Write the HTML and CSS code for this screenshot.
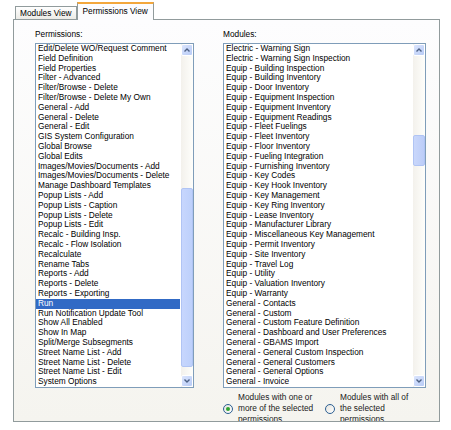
FILE: index.html
```html
<!DOCTYPE html>
<html>
<head>
<meta charset="utf-8">
<link rel="stylesheet" href="styles.css">
</head>
<body>
<div class="tabs">
  <div class="tab">Modules View</div>
  <div class="tab active">Permissions View</div>
</div>
<div class="panel">
  <div class="col col-perm">
    <div class="label">Permissions:</div>
    <div class="listbox">
      <ul class="items">
        <li>Edit/Delete WO/Request Comment</li>
        <li>Field Definition</li>
        <li>Field Properties</li>
        <li>Filter - Advanced</li>
        <li>Filter/Browse - Delete</li>
        <li>Filter/Browse - Delete My Own</li>
        <li>General - Add</li>
        <li>General - Delete</li>
        <li>General - Edit</li>
        <li>GIS System Configuration</li>
        <li>Global Browse</li>
        <li>Global Edits</li>
        <li>Images/Movies/Documents - Add</li>
        <li>Images/Movies/Documents - Delete</li>
        <li>Manage Dashboard Templates</li>
        <li>Popup Lists - Add</li>
        <li>Popup Lists - Caption</li>
        <li>Popup Lists - Delete</li>
        <li>Popup Lists - Edit</li>
        <li>Recalc - Building Insp.</li>
        <li>Recalc - Flow Isolation</li>
        <li>Recalculate</li>
        <li>Rename Tabs</li>
        <li>Reports - Add</li>
        <li>Reports - Delete</li>
        <li>Reports - Exporting</li>
        <li class="selected">Run</li>
        <li>Run Notification Update Tool</li>
        <li>Show All Enabled</li>
        <li>Show In Map</li>
        <li>Split/Merge Subsegments</li>
        <li>Street Name List - Add</li>
        <li>Street Name List - Delete</li>
        <li>Street Name List - Edit</li>
        <li>System Options</li>
      </ul>
      <div class="vscroll">
        <div class="sbtn"><svg viewBox="0 0 8 8" width="8" height="8"><polyline points="1.5,5.5 4,3 6.5,5.5" fill="none" stroke="#4d6185" stroke-width="1.4"/></svg></div>
        <div class="track"><div class="thumb thumb-big" style="margin-top:132px;height:179px"></div></div>
        <div class="sbtn"><svg viewBox="0 0 8 8" width="8" height="8"><polyline points="1.5,2.5 4,5 6.5,2.5" fill="none" stroke="#4d6185" stroke-width="1.4"/></svg></div>
      </div>
    </div>
  </div>
  <div class="col col-mod">
    <div class="label">Modules:</div>
    <div class="listbox">
      <ul class="items">
        <li>Electric - Warning Sign</li>
        <li>Electric - Warning Sign Inspection</li>
        <li>Equip - Building Inspection</li>
        <li>Equip - Building Inventory</li>
        <li>Equip - Door Inventory</li>
        <li>Equip - Equipment Inspection</li>
        <li>Equip - Equipment Inventory</li>
        <li>Equip - Equipment Readings</li>
        <li>Equip - Fleet Fuelings</li>
        <li>Equip - Fleet Inventory</li>
        <li>Equip - Floor Inventory</li>
        <li>Equip - Fueling Integration</li>
        <li>Equip - Furnishing Inventory</li>
        <li>Equip - Key Codes</li>
        <li>Equip - Key Hook Inventory</li>
        <li>Equip - Key Management</li>
        <li>Equip - Key Ring Inventory</li>
        <li>Equip - Lease Inventory</li>
        <li>Equip - Manufacturer Library</li>
        <li>Equip - Miscellaneous Key Management</li>
        <li>Equip - Permit Inventory</li>
        <li>Equip - Site Inventory</li>
        <li>Equip - Travel Log</li>
        <li>Equip - Utility</li>
        <li>Equip - Valuation Inventory</li>
        <li>Equip - Warranty</li>
        <li>General - Contacts</li>
        <li>General - Custom</li>
        <li>General - Custom Feature Definition</li>
        <li>General - Dashboard and User Preferences</li>
        <li>General - GBAMS Import</li>
        <li>General - General Custom Inspection</li>
        <li>General - General Customers</li>
        <li>General - General Options</li>
        <li>General - Invoice</li>
      </ul>
      <div class="vscroll">
        <div class="sbtn"><svg viewBox="0 0 8 8" width="8" height="8"><polyline points="1.5,5.5 4,3 6.5,5.5" fill="none" stroke="#4d6185" stroke-width="1.4"/></svg></div>
        <div class="track"><div class="thumb" style="margin-top:79px;height:31px"></div></div>
        <div class="sbtn"><svg viewBox="0 0 8 8" width="8" height="8"><polyline points="1.5,2.5 4,5 6.5,2.5" fill="none" stroke="#4d6185" stroke-width="1.4"/></svg></div>
      </div>
    </div>
    <div class="radios">
      <label class="radio radio-one"><span class="dot checked"></span><span class="rtext">Modules with one or more of the selected permissions</span></label>
      <label class="radio"><span class="dot"></span><span class="rtext">Modules with all of the selected permissions</span></label>
    </div>
  </div>
</div>
</body>
</html>
```
FILE: styles.css
```css
html, body {
  margin: 0;
  padding: 0;
  background: #ffffff;
}
body {
  width: 451px;
  height: 430px;
  overflow: hidden;
  font-family: "Liberation Sans", Arial, sans-serif;
  font-size: 8.3px;
  color: #000;
}
.tabs {
  display: flex;
  align-items: flex-end;
  height: 19px;
  padding-left: 15px;
}
.tab {
  height: 12px;
  line-height: 12px;
  padding: 0 4px;
  border: 1px solid #919b9c;
  border-bottom: none;
  background: linear-gradient(#ffffff, #ecebe6);
  font-size: 8.3px;
  white-space: nowrap;
}
.tab.active {
  position: relative;
  z-index: 1;
  height: 16px;
  line-height: 15px;
  margin-bottom: -1px;
  padding: 0 5px;
  background: #fcfcfe;
  border-top: 2px solid #f3a73c;
  border-left: 1px solid #919b9c;
  border-right: 1px solid #919b9c;
}
.panel {
  box-sizing: border-box;
  margin-left: 13px;
  width: 427px;
  height: 403px;
  border: 1px solid #919b9c;
  background: linear-gradient(#fdfdfe, #f5f4ef);
  padding: 9px 0 0 21px;
  display: flex;
  gap: 29px;
  overflow: hidden;
}
.col-perm { width: 159px; }
.col-mod { width: 203px; }
.label {
  height: 10px;
  line-height: 10px;
  margin-bottom: 4px;
}
.listbox {
  box-sizing: border-box;
  height: 345px;
  border: 1px solid #7f9db9;
  background: #fff;
  display: flex;
}
.items {
  list-style: none;
  margin: 0;
  padding: 0 1px 0 0;
  flex: 1;
  min-width: 0;
  overflow: hidden;
}
.items li {
  height: 9.8px;
  line-height: 9.8px;
  padding-left: 2px;
  white-space: nowrap;
}
.items li.selected {
  background: #316ac5;
  color: #fff;
}
.vscroll {
  width: 12px;
  display: flex;
  flex-direction: column;
  background: linear-gradient(90deg, #f3f1ec, #fefefb);
}
.sbtn {
  box-sizing: border-box;
  height: 12px;
  border: 1px solid #ffffff;
  border-radius: 2px;
  background: linear-gradient(135deg, #dbe5fd, #b8cbf6);
  display: flex;
  align-items: center;
  justify-content: center;
}
.sbtn svg { display: block; }
.track {
  flex: 1;
}
.thumb {
  box-sizing: border-box;
  border: 1px solid #b0c4f4;
  border-radius: 2px;
  background: linear-gradient(90deg, #c9d7fb, #bccdf8);
}
.thumb-big {
  background: linear-gradient(90deg, #c7d6fd, #bdd0fb);
}
.radios {
  display: flex;
  margin-top: 4px;
}
.radio {
  display: flex;
  align-items: center;
}
.radio-one { width: 102px; }
.dot {
  box-sizing: border-box;
  width: 10px;
  height: 10px;
  border-radius: 50%;
  border: 1px solid #2c5f93;
  background: linear-gradient(135deg, #e4e3dd, #ffffff);
  display: flex;
  align-items: center;
  justify-content: center;
  flex: none;
}
.dot.checked::after {
  content: "";
  width: 4px;
  height: 4px;
  border-radius: 50%;
  background: #2fa52f;
}
.rtext {
  width: 80px;
  margin-left: 5px;
  line-height: 11px;
  color: #1a1a1a;
}
```
